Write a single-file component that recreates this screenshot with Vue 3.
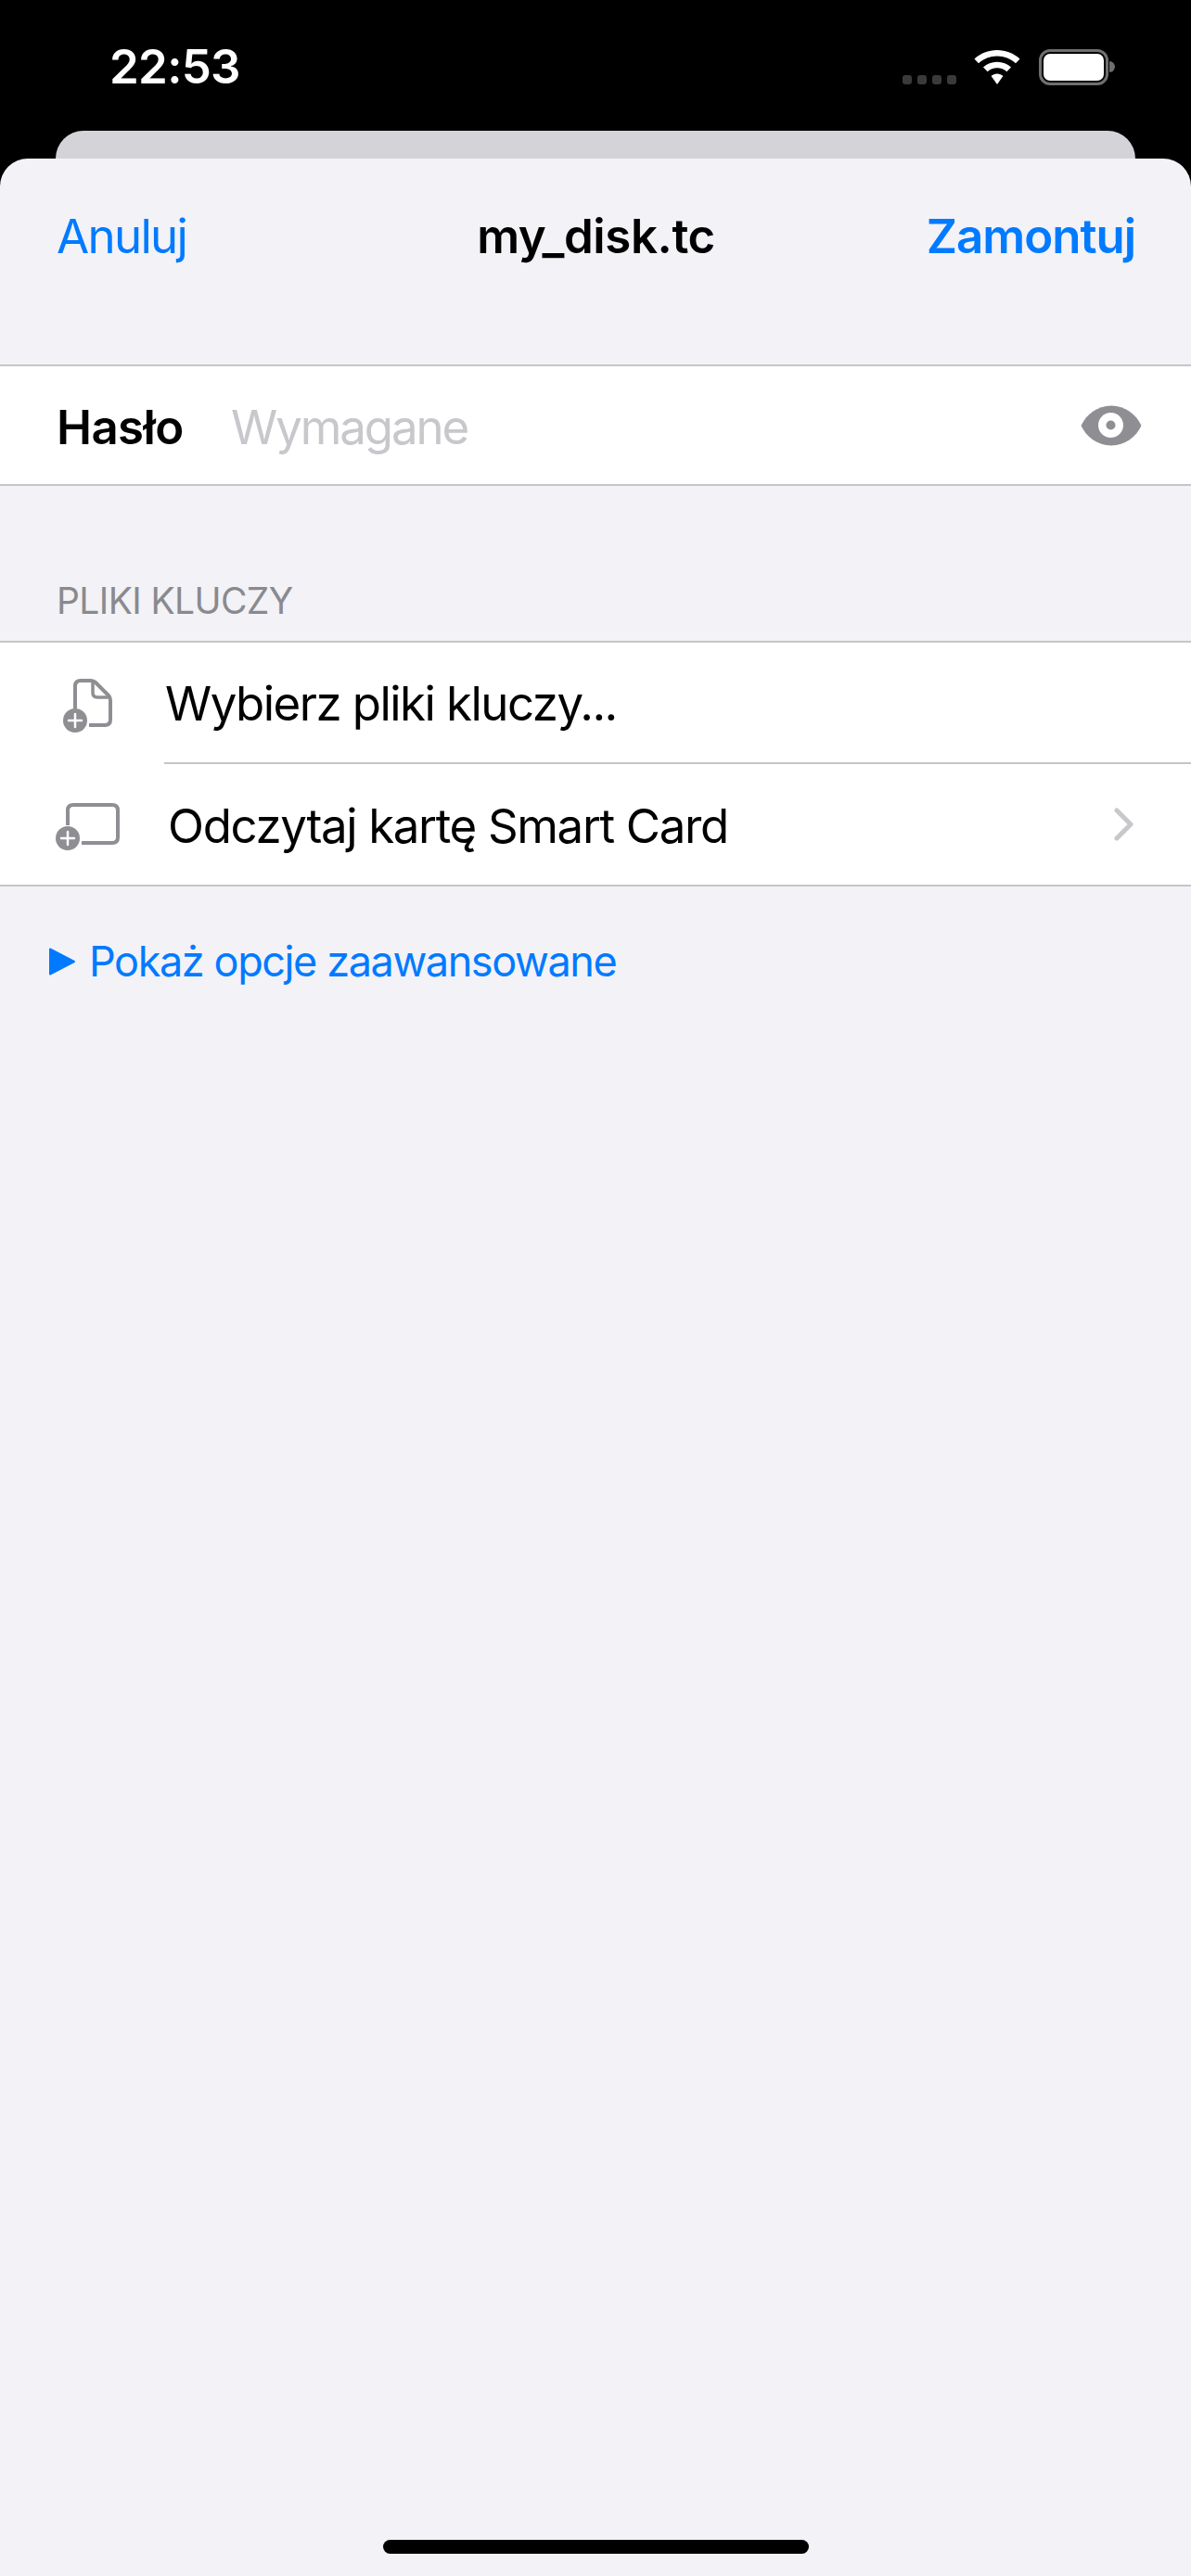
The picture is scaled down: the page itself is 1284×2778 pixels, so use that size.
<script setup>
</script>

<template>
  <div class="screen">
    <header class="status">
      <span class="time">22:53</span>
      <div class="status-icons">
        <div class="dots"><i></i><i></i><i></i><i></i></div>
        <svg class="wifi" width="50" height="37" viewBox="0 0 50 37">
          <path fill="#fff" d="M25 0C15.600 0 7.200 3.500 0.500 9.400L5 14.200C10.300 9.500 17.300 6.600 25 6.600C32.700 6.600 39.700 9.500 45 14.200L49.500 9.400C42.800 3.500 34.400 0 25 0Z"/>
          <path fill="#fff" d="M25 12.700C19.200 12.700 14 14.900 10 18.400L14.600 23.200C17.400 20.800 21 19.300 25 19.300C29 19.300 32.600 20.800 35.400 23.200L40 18.400C36 14.900 30.800 12.700 25 12.700Z"/>
          <path fill="#fff" d="M25 25.500C22.500 25.500 20.300 26.400 18.600 27.900L25 37L31.400 27.900C29.700 26.400 27.500 25.500 25 25.500Z"/>
        </svg>
        <div class="battery"><div class="battery-fill"></div><div class="battery-cap"></div></div>
      </div>
    </header>
    <div class="back-card"></div>
    <main class="sheet">
      <nav class="nav">
        <span class="nav-btn">Anuluj</span>
        <span class="nav-title">my_disk.tc</span>
        <span class="nav-btn strong">Zamontuj</span>
      </nav>

      <section class="group password">
        <span class="label">Hasło</span>
        <span class="placeholder">Wymagane</span>
        <svg class="eye" width="66" height="44" viewBox="0 0 66 44">
          <path fill="#8e8e93" d="M33 0.500C48 0.500 60 10 65.500 22C60 34 48 43.500 33 43.500C18 43.500 6 34 0.500 22C6 10 18 0.500 33 0.500Z"/>
          <circle cx="32.500" cy="21.500" r="13.500" fill="#fff"/>
          <circle cx="32.500" cy="21.500" r="5" fill="#8e8e93"/>
        </svg>
      </section>

      <h2 class="section-title">PLIKI KLUCZY</h2>
      <section class="group list">
        <div class="row">
          <div class="icon-cell">
            <svg width="64" height="70" viewBox="0 0 64 70">
              <path fill="none" stroke="#8e8e93" stroke-width="4" stroke-linejoin="round" d="M17 41V17Q17 11 23 11H34Q37 11 39 13L53 27Q55 29 55 32V53Q55 59 49 59H32"/>
              <path fill="none" stroke="#8e8e93" stroke-width="3.500" stroke-linejoin="round" d="M36 11V24Q36 29 41 29H55"/>
              <circle cx="17" cy="54" r="13" fill="#8e8e93"/>
              <path stroke="#fff" stroke-width="2.500" stroke-linecap="round" d="M17 47V61M10 54H24"/>
            </svg>
          </div>
          <span class="row-text first-text">Wybierz pliki kluczy...</span>
        </div>
        <div class="row second">
          <div class="icon-cell">
            <svg class="card-icon" width="72" height="70" viewBox="0 0 72 70">
              <path fill="none" stroke="#8e8e93" stroke-width="4" stroke-linejoin="round" d="M15 36V20Q15 14 21 14H63Q69 14 69 20V49Q69 55 63 55H30"/>
              <circle cx="15" cy="50" r="13" fill="#8e8e93"/>
              <path stroke="#fff" stroke-width="2.500" stroke-linecap="round" d="M15 43V57M8 50H22"/>
            </svg>
          </div>
          <span class="row-text shifted">Odczytaj kartę Smart Card</span>
          <svg class="chevron" width="21" height="36" viewBox="0 0 21 36">
            <path fill="none" stroke="#c7c7cc" stroke-width="5" stroke-linecap="round" stroke-linejoin="round" d="M3 3L18 18L3 33"/>
          </svg>
        </div>
      </section>

      <div class="advanced">
        <svg class="triangle" width="28" height="30" viewBox="0 0 28 30">
          <path fill="#007aff" stroke="#007aff" stroke-width="2" stroke-linejoin="round" d="M1 1.500V28.500L27 15Z"/>
        </svg>
        <span>Pokaż opcje zaawansowane</span>
      </div>

      <div class="home-indicator"></div>
    </main>
  </div>
</template>

<style>
html, body { margin: 0; background: #000; }
</style>

<style scoped>
.screen {
  width: 1284px;
  height: 2778px;
  display: flex;
  flex-direction: column;
  background: #000;
  font-family: Inter, "Liberation Sans", sans-serif;
  overflow: hidden;
}
.status {
  height: 141px;
  flex: none;
  box-sizing: border-box;
  display: flex;
  justify-content: space-between;
  align-items: flex-start;
  padding: 41px 89px 0 118px;
}
.time {
  color: #fff;
  font-size: 51px;
  font-weight: 600;
  line-height: 62px;
  letter-spacing: -0.7px;
}
.status-icons {
  display: flex;
  align-items: flex-start;
  padding-top: 12px;
}
.dots {
  display: flex;
  gap: 6px;
  margin-top: 28px;
  margin-right: 19px;
}
.dots i {
  display: block;
  width: 10px;
  height: 10px;
  border-radius: 3px;
  background: #3a3a3c;
}
.wifi { margin-right: 20px; margin-top: 1px; }
.battery {
  position: relative;
  width: 75px;
  height: 39px;
  box-sizing: border-box;
  border: 3px solid #6f6f6f;
  border-radius: 12px;
  padding: 2px;
}
.battery-fill {
  width: 100%;
  height: 100%;
  background: #fff;
  border-radius: 7px;
}
.battery-cap {
  position: absolute;
  right: -10px;
  top: 10px;
  width: 6px;
  height: 12px;
  background: #6f6f6f;
  border-radius: 0 6px 6px 0;
}
.back-card {
  flex: none;
  height: 30px;
  margin: 0 60px;
  background: #d4d3d8;
  border-radius: 30px 30px 0 0;
}
.sheet {
  flex: 1;
  position: relative;
  display: flex;
  flex-direction: column;
  background: #f2f2f7;
  border-radius: 30px 30px 0 0;
}
.nav {
  display: grid;
  grid-template-columns: 1fr auto 1fr;
  align-items: center;
  height: 166px;
  padding: 0 60px 0 61px;
  font-size: 51px;
}
.nav-btn { color: #007aff; letter-spacing: -1.7px; }
.nav-btn.strong { font-weight: 600; text-align: right; letter-spacing: -1px; }
.nav-title { font-weight: 600; color: #000; letter-spacing: -0.4px; }
.group {
  background: #fff;
  border-top: 2px solid #c6c6c8;
  border-bottom: 2px solid #c6c6c8;
}
.password {
  margin-top: 56px;
  height: 127px;
  display: flex;
  align-items: center;
  padding: 0 53px 0 61px;
  font-size: 51px;
}
.label { font-weight: 600; color: #000; width: 188px; letter-spacing: -0.6px; margin-top: 3px; }
.placeholder { color: #c7c7cc; flex: 1; letter-spacing: -2.1px; margin-top: 3px; }
.section-title {
  margin: 100px 0 0;
  padding-left: 61px;
  height: 67px;
  font-size: 39px;
  font-weight: 400;
  line-height: 48px;
  color: #8a8a8e;
  letter-spacing: -0.6px;
}
.row {
  height: 130px;
  display: flex;
  align-items: center;
  font-size: 51px;
  color: #000;
}
.second {
  position: relative;
  padding-right: 62px;
  height: 131px;
}
.second::before {
  content: "";
  position: absolute;
  left: 177px;
  right: 0;
  top: -1px;
  height: 2px;
  background: #c6c6c8;
}
.icon-cell {
  width: 178px;
  flex: none;
  display: flex;
  padding-left: 64px;
  box-sizing: border-box;
}
.card-icon { margin-left: -6px; }
.row-text { flex: 1; }
.first-text { letter-spacing: -1.55px; }
.shifted { margin-left: 3px; margin-top: 3px; letter-spacing: -1.36px; }
.advanced {
  display: flex;
  align-items: center;
  gap: 15px;
  padding-left: 53px;
  margin-top: 53px;
  color: #007aff;
  font-size: 45px;
  letter-spacing: -1.4px;
}
.home-indicator {
  position: absolute;
  left: 413px;
  bottom: 24px;
  width: 459px;
  height: 15px;
  border-radius: 8px;
  background: #000;
}
</style>
